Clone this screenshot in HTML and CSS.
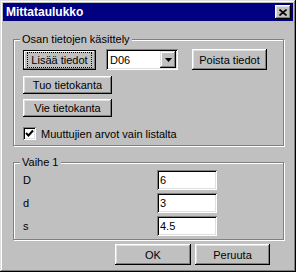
FILE: index.html
```html
<!DOCTYPE html>
<html lang="fi">
<head>
<meta charset="UTF-8" />
<title>Mittataulukko</title>
<link rel="stylesheet" href="styles.css">
</head>
<body>

<div class="window">
  <div class="titlebar">
    <span class="title">Mittataulukko</span>
    <button class="close"><svg width="8" height="7" viewBox="0 0 8 7"><path d="M0.5 0.5 L7.5 6.5 M7.5 0.5 L0.5 6.5" stroke="#000" stroke-width="1.6" fill="none"/></svg></button>
  </div>

  <div class="content">
    <fieldset class="group group-osa">
      <legend>Osan tietojen käsittely</legend>
      <div class="group-body">
        <div class="row">
          <button class="btn btn-default btn-lisaa"><span class="focus">Lisää tiedot</span></button>
          <div class="combo">
            <span class="combo-text">D06</span>
            <span class="combo-arrow"><svg width="7" height="4" viewBox="0 0 7 4"><polygon points="0,0 7,0 3.5,4" fill="#000"/></svg></span>
          </div>
          <button class="btn btn-poista">Poista tiedot</button>
        </div>
        <button class="btn btn-db btn-tuo">Tuo tietokanta</button>
        <button class="btn btn-db btn-vie">Vie tietokanta</button>
        <label class="check">
          <span class="box"><svg width="9" height="9" viewBox="0 0 9 9"><path d="M1 4 L3.5 6.5 L8 1.5" stroke="#000" stroke-width="2" fill="none"/></svg></span>
          Muuttujien arvot vain listalta
        </label>
      </div>
    </fieldset>

    <fieldset class="group group-vaihe">
      <legend>Vaihe 1</legend>
      <div class="group-body">
        <div class="field"><span class="field-label">D</span><input class="field-input" type="text" value="6" /></div>
        <div class="field"><span class="field-label">d</span><input class="field-input" type="text" value="3" /></div>
        <div class="field"><span class="field-label">s</span><input class="field-input" type="text" value="4.5" /></div>
      </div>
    </fieldset>

    <div class="actions">
      <button class="btn btn-ok">OK</button>
      <button class="btn btn-cancel">Peruuta</button>
    </div>
  </div>
</div>

</body>
</html>
```

FILE: styles.css
```css
body { margin: 0; background: #c0c0c0; font-family: "Liberation Sans", Arial, sans-serif; font-size: 11px; color: #000; }

.window { width: 296px; height: 272px; box-sizing: border-box; padding: 3px; background: #c0c0c0;
  box-shadow: inset -1px -1px #000, inset 1px 1px #dfdfdf, inset -2px -2px #808080, inset 2px 2px #fff; }

.titlebar { height: 18px; background: #000080; color: #fff; display: flex; align-items: center; justify-content: space-between; padding: 0 2px 0 3px; }
.title { font-weight: bold; font-size: 12px; }
.close { width: 16px; height: 14px; padding: 0; border: 0; background: #c0c0c0; display: flex; align-items: center; justify-content: center;
  box-shadow: inset -1px -1px #000, inset 1px 1px #fff, inset -2px -2px #808080, inset 2px 2px #dfdfdf; }

.content { padding-left: 10px; }

.group { width: 271px; box-sizing: border-box; margin: 0; padding: 0 9px; border: 1px solid #808080; box-shadow: inset 1px 1px #fff, 1px 1px #fff; }
.group legend { padding: 0 2px; margin-left: -3px; line-height: 13px; background: #c0c0c0; }
.group-body { display: flex; flex-direction: column; align-items: flex-start; }

.group-osa { margin-top: 12px; padding-top: 3px; padding-bottom: 5px; }
.group-vaihe { margin-top: 10px; padding-top: 1px; padding-bottom: 3px; }

.btn { font: inherit; color: #000; background: #c0c0c0; border: 0; padding: 0; box-sizing: border-box;
  box-shadow: inset -1px -1px #000, inset 1px 1px #fff, inset -2px -2px #808080, inset 2px 2px #dfdfdf; }
.btn-default { box-shadow: inset 0 0 0 1px #000, inset -2px -2px #808080, inset 2px 2px #fff; }
.focus { display: block; margin: 0 4px; padding: 1px 0; border: 1px dotted #000; }

.row { display: flex; align-items: flex-start; }
.btn-lisaa { width: 73px; height: 20px; margin-top: 1px; }
.btn-poista { width: 75px; height: 21px; margin-left: 14px; }
.btn-db { width: 89px; height: 18px; }
.btn-tuo { margin-top: 6px; }
.btn-vie { margin-top: 5px; }

.combo { width: 72px; height: 21px; margin-left: 10px; box-sizing: border-box; background: #fff; display: flex; align-items: center; justify-content: space-between; padding: 2px;
  box-shadow: inset 1px 1px #808080, inset -1px -1px #fff, inset 2px 2px #000, inset -2px -2px #dfdfdf; }
.combo-text { padding-left: 2px; }
.combo-arrow { width: 16px; height: 17px; box-sizing: border-box; background: #c0c0c0; display: flex; align-items: center; justify-content: center;
  box-shadow: inset -1px -1px #000, inset 1px 1px #dfdfdf, inset -2px -2px #808080, inset 2px 2px #fff; }

.check { display: flex; align-items: center; margin-top: 10px; height: 13px; }
.box { width: 13px; height: 13px; box-sizing: border-box; background: #fff; margin-right: 5px; display: flex; align-items: center; justify-content: center;
  box-shadow: inset 1px 1px #808080, inset -1px -1px #fff, inset 2px 2px #000, inset -2px -2px #dfdfdf; }

.field { display: flex; align-items: center; height: 20px; }
.field + .field { margin-top: 3px; }
.field-label { width: 134px; }
.field-input { width: 60px; height: 20px; box-sizing: border-box; border: 0; padding: 0 3px; font: inherit; background: #fff; outline: none;
  box-shadow: inset 1px 1px #808080, inset -1px -1px #fff, inset 2px 2px #000, inset -2px -2px #dfdfdf; }

.actions { display: flex; margin-top: 4px; padding-left: 102px; }
.btn-ok { width: 76px; height: 21px; }
.btn-cancel { width: 75px; height: 21px; margin-left: 4px; }
```
